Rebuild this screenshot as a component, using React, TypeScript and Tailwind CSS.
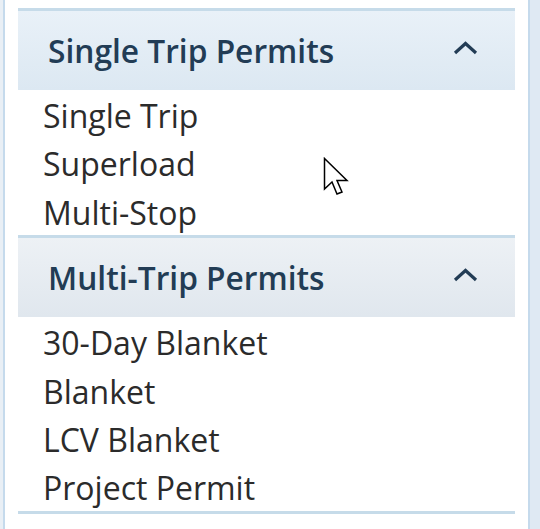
const groups = [
  {
    title: "Single Trip Permits",
    tone: "from-[#e9f1f8] to-[#dce8f2]",
    items: ["Single Trip", "Superload", "Multi-Stop"],
  },
  {
    title: "Multi-Trip Permits",
    tone: "from-[#edf1f5] to-[#e0e7ee]",
    items: ["30-Day Blanket", "Blanket", "LCV Blanket", "Project Permit"],
  },
];

export default function App() {
  return (
    <div
      className="relative flex h-[529px] w-[540px] bg-[#dfe9f3]"
      style={{ fontFamily: '"Open Sans", "Noto Sans", sans-serif' }}
    >
      <div className="w-[3px] bg-[#e9eff5]" />
      <div className="w-[2px] bg-[#c5daec]" />
      <div className="w-[523px] bg-white pl-[13px] pr-[13px] pt-2">
        {groups.map((g) => (
          <div key={g.title} className="border-t-[3px] border-[#c6dbe9]">
            <div
              className={`flex h-[79px] items-center justify-between bg-gradient-to-b ${g.tone} pl-[30px] pr-[37px]`}
            >
              <span className="text-[31.7px] font-semibold leading-none text-[#223c55]">
                {g.title}
              </span>
              <svg width="25" height="14" viewBox="0 0 25 14" className="mb-[6px]">
                <path
                  d="M2 12 L12.5 2.5 L23 12"
                  fill="none"
                  stroke="#223c55"
                  strokeWidth="3.2"
                />
              </svg>
            </div>
            <ul className="pl-[25px]">
              {g.items.map((it) => (
                <li
                  key={it}
                  className="h-[48.4px] pt-[3px] text-[32px] leading-[45.4px] text-[#2b2b2b]"
                >
                  {it}
                </li>
              ))}
            </ul>
          </div>
        ))}
        <div className="border-t-[3px] border-[#c6dbe9]" />
      </div>
      <div className="w-[2px] bg-[#c5daec]" />
      <svg
        className="absolute left-[323px] top-[157px]"
        width="26"
        height="40"
        viewBox="0 0 26 40"
      >
        <path
          d="M1.5 1.5 L1.5 32 L9 25 L14 37 L19 35 L14 23.5 L24 23.5 Z"
          fill="white"
          stroke="black"
          strokeWidth="1.5"
          strokeLinejoin="miter"
        />
      </svg>
    </div>
  );
}
